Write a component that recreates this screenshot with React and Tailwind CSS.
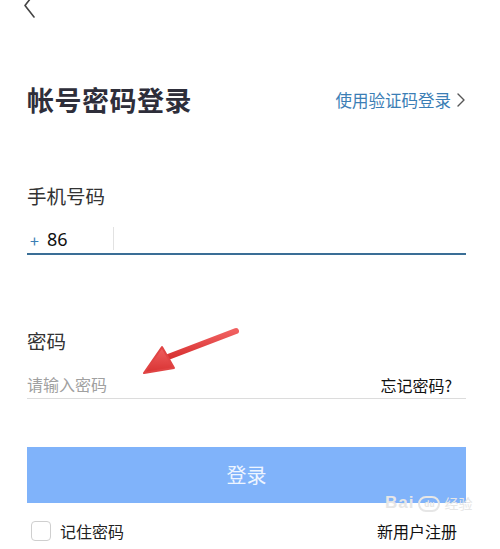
const font = { fontFamily: '"Noto Sans CJK SC", "Noto Sans", sans-serif' };

const App = () => {
  return (
    <div className="relative w-[500px] h-[549px] overflow-hidden bg-white text-[#333]" style={font}>
      {/* back */}
      <div className="h-[20px] pl-[22px]">
        <svg width="16" height="26" viewBox="0 0 16 26" className="-mt-[8px]" fill="none">
          <path d="M12 2 L3 13.5 L12 25" stroke="#444" strokeWidth="1.6" strokeLinecap="round" strokeLinejoin="round" />
        </svg>
      </div>

      <div className="ml-[27px] w-[439px]">
        {/* title */}
        <div className="mt-[70px] h-[36px] flex items-center justify-between">
          <h1 className="text-[27px] leading-[36px] font-bold text-[#2e2e3a] tracking-[0.5px]">帐号密码登录</h1>
          <div className="flex items-center gap-[5px] text-[#3b7eb5] text-[16.5px] leading-[36px]">
            <span>使用验证码登录</span>
            <svg width="10" height="16" viewBox="0 0 10 16" fill="none">
              <path d="M2 2 L8 8 L2 14" stroke="#555" strokeWidth="1.4" strokeLinecap="round" strokeLinejoin="round" />
            </svg>
          </div>
        </div>

        {/* phone */}
        <div className="mt-[64px] text-[19.5px] leading-[28px] text-[#333]">手机号码</div>
        <div className="mt-[16px] h-[29px] flex items-center border-b-2 border-[#3a6e96]">
          <span className="text-[#3b7eb5] text-[16px] pl-[3px] w-[20px]">+</span>
          <span className="text-[18px] text-[#111] w-[66px]" style={{ fontFamily: '"Noto Sans", "Open Sans", sans-serif' }}>86</span>
          <span className="w-px h-[23px] bg-[#e2e2e2] -mt-[2px]"></span>
        </div>

        {/* password */}
        <div className="mt-[72px] text-[19.5px] leading-[28px] text-[#333]">密码</div>
        <div className="mt-[14px] h-[30px] flex items-center justify-between border-b border-[#dcdcdc]">
          <span className="text-[16px] text-[#a0a0a0]">请输入密码</span>
          <span className="text-[16px] text-[#111] mr-[14px] mt-[2px]">忘记密码?</span>
        </div>

        {/* login button */}
        <div className="mt-[48px] h-[56px] bg-[#80b3fa] flex items-center justify-center">
          <span className="text-[20px] text-[#eef5ff]">登录</span>
        </div>

        {/* bottom */}
        <div className="mt-[14px] h-[28px] flex items-center justify-between">
          <div className="flex items-center gap-[9px]">
            <span className="ml-[4px] w-[20px] h-[20px] rounded-[4px] border border-[#cfcfcf]"></span>
            <span className="text-[16px] text-[#222]">记住密码</span>
          </div>
          <span className="text-[16px] text-[#111] mr-[9px]">新用户注册</span>
        </div>
      </div>

      {/* annotation arrow */}
      <svg className="absolute left-0 top-0 pointer-events-none" width="500" height="549" viewBox="0 0 500 549">
        <defs>
          <linearGradient id="ar" x1="0" y1="0" x2="0" y2="1">
            <stop offset="0" stopColor="#f06060" />
            <stop offset="1" stopColor="#d83232" />
          </linearGradient>
        </defs>
        <path d="M236 331 L168 357" stroke="url(#ar)" strokeWidth="6" strokeLinecap="round" />
        <path d="M144 373 L162 347 L174 368 Z" fill="url(#ar)" stroke="#e04444" strokeWidth="2" strokeLinejoin="round" />
      </svg>

      {/* watermark */}
      <div className="absolute left-[385px] top-[494px] flex items-end gap-[4px] text-[#e6e6e6] pointer-events-none">
        <span className="text-[17px] leading-[18px] font-bold tracking-[1px]" style={{ fontFamily: '"Liberation Sans", sans-serif' }}>Bai</span>
        <span className="w-[22px] h-[16px] rounded-full border-2 border-[#e6e6e6] text-[8px] leading-[12px] text-center font-bold">du</span>
        <span className="text-[14px] leading-[17px]">经验</span>
      </div>
    </div>
  );
};

export default App;
